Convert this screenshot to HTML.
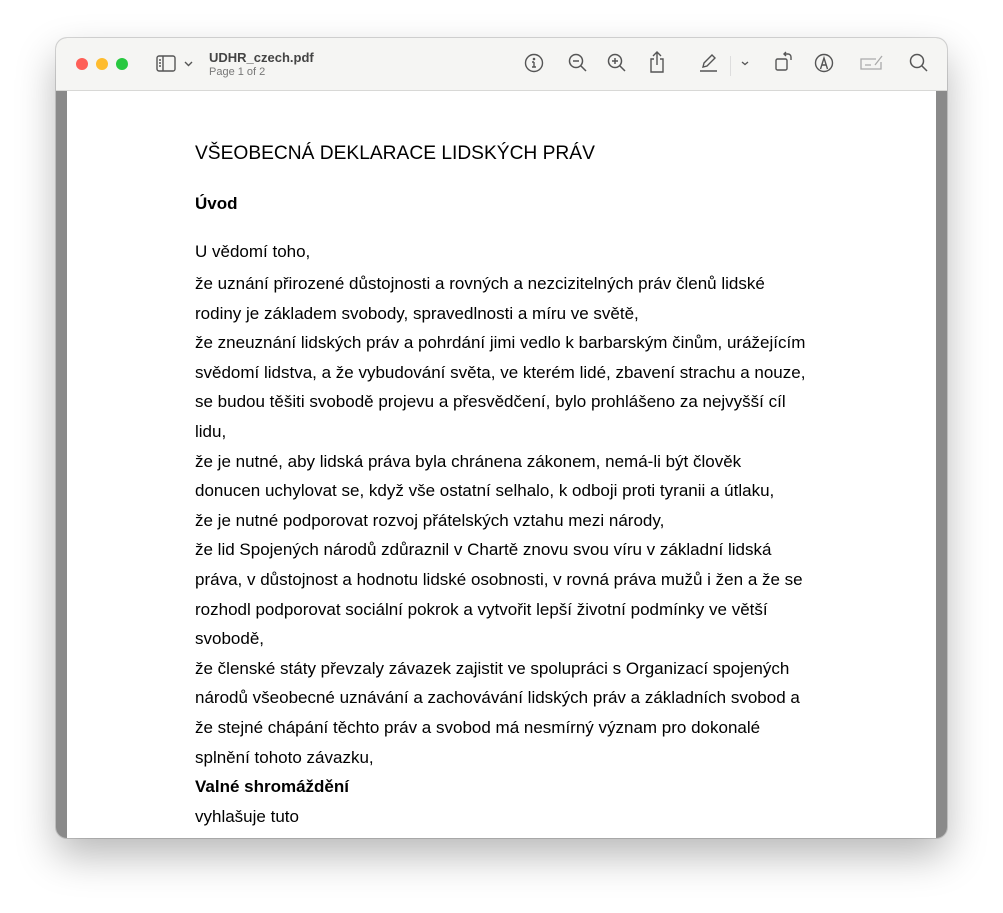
<!DOCTYPE html>
<html><head><meta charset="utf-8"><style>
body{margin:0;width:1003px;height:913px;background:#fff;position:relative;overflow:hidden;font-family:"Liberation Sans",Arial,sans-serif}
.win{position:absolute;left:56px;top:38px;width:891px;height:800px;border-radius:11px;overflow:hidden;background:#8a8a8a;box-shadow:0 18px 40px rgba(0,0,0,.28),0 0 0 1px rgba(0,0,0,.15)}
.tb{position:absolute;left:0;top:0;width:891px;height:52px;background:#f5f5f3;border-bottom:1px solid #d8d8d6}
.page{position:absolute;left:11px;top:53px;width:869px;height:747px;background:#fff}
.dot{position:absolute;top:20px;width:12px;height:12px;border-radius:50%}
.t{position:absolute;left:128px;font-size:17px;color:#000;white-space:nowrap}
.ic{position:absolute;top:14px}
</style></head><body>
<div class="win">
<div class="tb">
<div class="dot" style="left:20px;background:#fe5f57"></div>
<div class="dot" style="left:40px;background:#febc2e"></div>
<div class="dot" style="left:60px;background:#28c840"></div>
<svg class="ic" style="left:100px;top:17px" width="40" height="20" viewBox="0 0 40 20" fill="none" stroke="#555" stroke-width="1.4"><rect x="1" y="1" width="18" height="15" rx="2"/><line x1="7" y1="1" x2="7" y2="16"/><path d="M3 5h2M3 8h2M3 11h2" /><path d="M29 7l3.5 3.5L36 7"/></svg>
<div style="position:absolute;left:153px;top:12px;font-size:13px;font-weight:bold;color:#444">UDHR_czech.pdf</div>
<div style="position:absolute;left:153px;top:28px;font-size:11px;color:#777">Page 1 of 2</div>
<svg class="ic" style="left:467px" width="22" height="22" viewBox="0 0 22 22" fill="none" stroke="#555" stroke-width="1.4"><circle cx="11" cy="11" r="8.5"/><line x1="11" y1="10" x2="11" y2="15"/><path d="M9 10h2M9 15h4"/><circle cx="11" cy="7" r=".6" fill="#555"/></svg>
<svg class="ic" style="left:511px" width="22" height="22" viewBox="0 0 22 22" fill="none" stroke="#555" stroke-width="1.5"><circle cx="9" cy="9" r="6.5"/><path d="M14 14l5 5M6 9h6"/></svg>
<svg class="ic" style="left:550px" width="22" height="22" viewBox="0 0 22 22" fill="none" stroke="#555" stroke-width="1.5"><circle cx="9" cy="9" r="6.5"/><path d="M14 14l5 5M6 9h6M9 6v6"/></svg>
<svg class="ic" style="left:590px;top:12px" width="22" height="24" viewBox="0 0 22 24" fill="none" stroke="#555" stroke-width="1.4"><path d="M8 9H5v13h12V9h-3M11 15V2M7 6l4-4 4 4"/></svg>
<svg class="ic" style="left:642px" width="22" height="22" viewBox="0 0 22 22" fill="none" stroke="#555" stroke-width="1.4"><path d="M5 15l1-4L14 3l3 3-8 8z"/><line x1="2" y1="19" x2="19" y2="19"/></svg>
<div style="position:absolute;left:674px;top:18px;width:1px;height:20px;background:#ddd"></div>
<svg class="ic" style="left:682px" width="14" height="22" viewBox="0 0 14 22" fill="none" stroke="#555" stroke-width="1.3"><path d="M4 10l3 2.5 3-2.5"/></svg>
<svg class="ic" style="left:717px;top:12px" width="22" height="24" viewBox="0 0 22 24" fill="none" stroke="#555" stroke-width="1.4"><rect x="3" y="9" width="11" height="11" rx="1.5"/><path d="M12 4h3a3 3 0 0 1 3 3v3M13 2l-2 2 2 2"/></svg>
<svg class="ic" style="left:757px" width="22" height="22" viewBox="0 0 22 22" fill="none" stroke="#555" stroke-width="1.4"><circle cx="11" cy="11" r="8.5"/><path d="M7.5 17L11 6l3.5 11M9 13h4"/></svg>
<svg class="ic" style="left:803px" width="26" height="22" viewBox="0 0 26 22" fill="none" stroke="#aaa" stroke-width="1.3"><path d="M17 7H2v10h20v-7"/><path d="M6 13h6M16 13l7-9" /></svg>
<svg class="ic" style="left:852px" width="22" height="22" viewBox="0 0 22 22" fill="none" stroke="#555" stroke-width="1.5"><circle cx="9" cy="9" r="6.5"/><path d="M14 14l5 5"/></svg>
</div>
<div class="page">
<div class="t" style="top:52px;font-size:19.2px">VŠEOBECNÁ DEKLARACE LIDSKÝCH PRÁV</div>
<div class="t" style="top:103px;font-size:17px;font-weight:bold">Úvod</div>
<div class="t" style="top:151px">U vědomí toho,</div>
<div class="t" style="top:178px;line-height:29.6px">že uznání přirozené důstojnosti a rovných a nezcizitelných práv členů lidské<br>rodiny je základem svobody, spravedlnosti a míru ve světě,<br>že zneuznání lidských práv a pohrdání jimi vedlo k barbarským činům, urážejícím<br>svědomí lidstva, a že vybudování světa, ve kterém lidé, zbavení strachu a nouze,<br>se budou těšiti svobodě projevu a přesvědčení, bylo prohlášeno za nejvyšší cíl<br>lidu,<br>že je nutné, aby lidská práva byla chránena zákonem, nemá-li být člověk<br>donucen uchylovat se, když vše ostatní selhalo, k odboji proti tyranii a útlaku,<br>že je nutné podporovat rozvoj přátelských vztahu mezi národy,<br>že lid Spojených národů zdůraznil v Chartě znovu svou víru v základní lidská<br>práva, v důstojnost a hodnotu lidské osobnosti, v rovná práva mužů i žen a že se<br>rozhodl podporovat sociální pokrok a vytvořit lepší životní podmínky ve větší<br>svobodě,<br>že členské státy převzaly závazek zajistit ve spolupráci s Organizací spojených<br>národů všeobecné uznávání a zachovávání lidských práv a základních svobod a<br>že stejné chápání těchto práv a svobod má nesmírný význam pro dokonalé<br>splnění tohoto závazku,<br><b>Valné shromáždění</b><br>vyhlašuje tuto</div>
</div>
</div>
</body></html>
